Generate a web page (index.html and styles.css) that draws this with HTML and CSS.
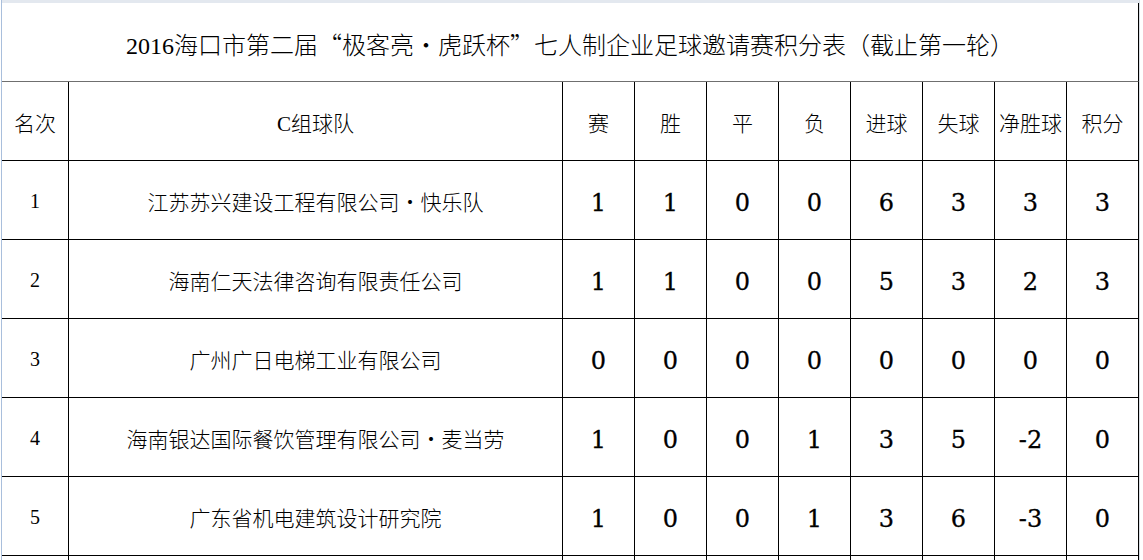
FILE: index.html
```html
<!DOCTYPE html>
<html lang="zh-CN">
<head>
<meta charset="utf-8">
<title>积分表</title>
<link rel="stylesheet" href="styles.css">
</head>
<body>
<div class="page">
  <div class="sheet">
    <div class="topstrip"></div>
    <div class="grid">
      <div class="cell title">2016海口市第二届<span class="fw">“</span>极客亮<span class="fw">•</span>虎跃杯<span class="fw">”</span>七人制企业足球邀请赛积分表（截止第一轮）</div>

      <div class="cell head">名次</div>
      <div class="cell head">C组球队</div>
      <div class="cell head">赛</div>
      <div class="cell head">胜</div>
      <div class="cell head">平</div>
      <div class="cell head">负</div>
      <div class="cell head">进球</div>
      <div class="cell head">失球</div>
      <div class="cell head">净胜球</div>
      <div class="cell head">积分</div>

      <div class="cell rank">1</div>
      <div class="cell team">江苏苏兴建设工程有限公司<span class="fw">•</span>快乐队</div>
      <div class="cell num">1</div><div class="cell num">1</div><div class="cell num">0</div><div class="cell num">0</div><div class="cell num">6</div><div class="cell num">3</div><div class="cell num">3</div><div class="cell num">3</div>

      <div class="cell rank">2</div>
      <div class="cell team">海南仁天法律咨询有限责任公司</div>
      <div class="cell num">1</div><div class="cell num">1</div><div class="cell num">0</div><div class="cell num">0</div><div class="cell num">5</div><div class="cell num">3</div><div class="cell num">2</div><div class="cell num">3</div>

      <div class="cell rank">3</div>
      <div class="cell team">广州广日电梯工业有限公司</div>
      <div class="cell num">0</div><div class="cell num">0</div><div class="cell num">0</div><div class="cell num">0</div><div class="cell num">0</div><div class="cell num">0</div><div class="cell num">0</div><div class="cell num">0</div>

      <div class="cell rank">4</div>
      <div class="cell team">海南银达国际餐饮管理有限公司<span class="fw">•</span>麦当劳</div>
      <div class="cell num">1</div><div class="cell num">0</div><div class="cell num">0</div><div class="cell num">1</div><div class="cell num">3</div><div class="cell num">5</div><div class="cell num">-2</div><div class="cell num">0</div>

      <div class="cell rank">5</div>
      <div class="cell team">广东省机电建筑设计研究院</div>
      <div class="cell num">1</div><div class="cell num">0</div><div class="cell num">0</div><div class="cell num">1</div><div class="cell num">3</div><div class="cell num">6</div><div class="cell num">-3</div><div class="cell num">0</div>

      <div class="cell"></div><div class="cell"></div><div class="cell"></div><div class="cell"></div><div class="cell"></div>
      <div class="cell"></div><div class="cell"></div><div class="cell"></div><div class="cell"></div><div class="cell"></div>
    </div>
  </div>
  <div class="margin"></div>
</div>
</body>
</html>
```

FILE: styles.css
```css
html, body {
  margin: 0;
  padding: 0;
  background: #ffffff;
}

.page {
  display: flex;
  height: 560px;
  overflow: hidden;
}

.sheet {
  margin-left: 1px;
  border-left: 1px solid #a9bfdc;
  display: flex;
  flex-direction: column;
}

.topstrip {
  height: 3px;
  background: #e3e8ef;
  flex: none;
}

.grid {
  display: grid;
  grid-template-columns: 67px 494px repeat(8, 72px);
  grid-auto-rows: 79px;
}

.cell {
  box-sizing: border-box;
  border-right: 1px solid #000;
  border-bottom: 1px solid #000;
  display: flex;
  align-items: center;
  justify-content: center;
  color: #000;
  font-family: "Liberation Serif", "Noto Sans CJK SC", serif;
  font-weight: 300;
  font-size: 21px;
  white-space: nowrap;
}

.title {
  grid-column: 1 / -1;
  border-bottom-color: #6f6f6f;
  font-size: 24px;
  padding-top: 2px;
}

.head {
  padding-top: 1px;
}

.fw {
  font-family: "Noto Sans CJK SC", sans-serif;
}

.rank {
  font-size: 20px;
  padding-top: 2px;
}

.team {
  padding-top: 2px;
}

.num {
  font-family: "DejaVu Serif", serif;
  font-weight: 400;
  font-size: 24px;
  padding-top: 5px;
  -webkit-text-stroke: 0.3px #000;
}

.margin {
  width: 4px;
  border-left: 1px solid #d8dde3;
  background: #ffffff;
}
```
